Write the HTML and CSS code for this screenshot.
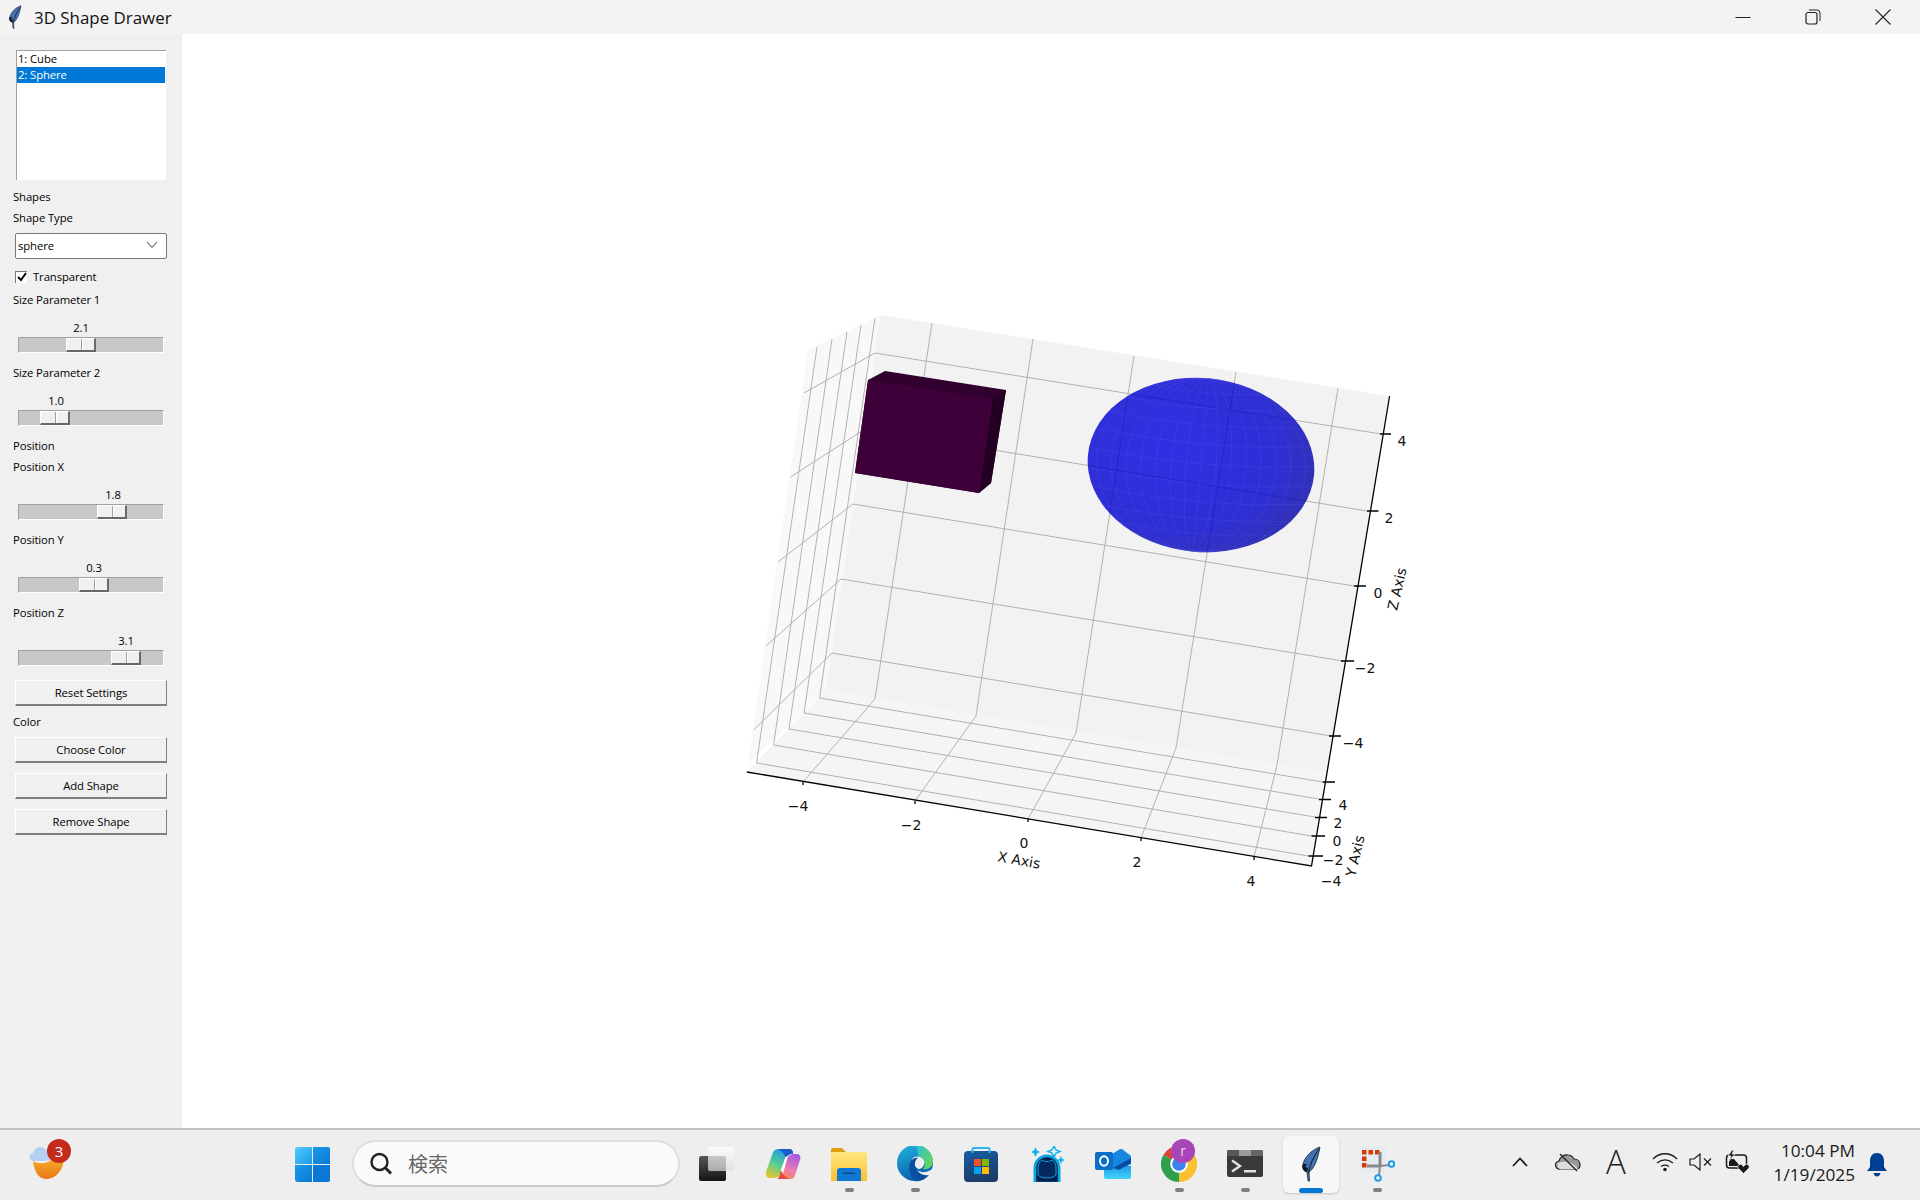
FILE: index.html
```html
<!DOCTYPE html>
<html lang="en">
<head>
  <meta charset="UTF-8">
  <meta name="viewport" content="width=device-width, initial-scale=1.0">
  <title>3D Shape Drawer</title>
  <link rel="stylesheet" href="styles.css">
</head>
<body>
  <svg class="defs" width="0" height="0">
    <defs>
      <symbol id="feather" viewBox="0 0 36 36">
        <path d="M27 1C20 3 12 10 10 18c-1 4 0 7 4 8l1 9h1.6L16 26C22 22 25 12 27 1z" fill="#4272b0" stroke="#10151f" stroke-width="0.700"/>
        <path d="M26 3C21 10 17 18 15.500 27" fill="none" stroke="#0c1420" stroke-width="1"/>
        <path d="M10 18c-1 4 0 7 4 8l1-4-3-1 2-3-3 0z" fill="#10151f"/>
      </symbol>
      <linearGradient id="winA" x1="0" y1="0" x2="1" y2="1"><stop offset="0" stop-color="#52cbfb"/><stop offset="1" stop-color="#1a9be8"/></linearGradient>
      <linearGradient id="winB" x1="0" y1="0" x2="1" y2="1"><stop offset="0" stop-color="#1a9be8"/><stop offset="1" stop-color="#0a78d4"/></linearGradient>
      <linearGradient id="sunG" x1="0" y1="0" x2="0" y2="1"><stop offset="0" stop-color="#f7b52a"/><stop offset="1" stop-color="#e9781a"/></linearGradient>
      <linearGradient id="dark" x1="0" y1="0" x2="0" y2="1"><stop offset="0" stop-color="#555"/><stop offset="1" stop-color="#141414"/></linearGradient>
      <linearGradient id="glass" x1="0" y1="0" x2="0" y2="1"><stop offset="0" stop-color="#fff"/><stop offset="1" stop-color="#ddd"/></linearGradient>
      <linearGradient id="copL" x1="0.6" y1="0" x2="0.2" y2="1"><stop offset="0" stop-color="#1a9be8"/><stop offset="0.55" stop-color="#5fce8a"/><stop offset="1" stop-color="#e8c62c"/></linearGradient>
      <linearGradient id="copR" x1="0.7" y1="0" x2="0.3" y2="1"><stop offset="0" stop-color="#a45be0"/><stop offset="0.6" stop-color="#ee7cb0"/><stop offset="1" stop-color="#f58a50"/></linearGradient>
      <linearGradient id="folder" x1="0" y1="0" x2="0" y2="1"><stop offset="0" stop-color="#ffe680"/><stop offset="1" stop-color="#fcc02e"/></linearGradient>
      <linearGradient id="edgeB" x1="0" y1="0" x2="0.4" y2="1"><stop offset="0" stop-color="#22b4dc"/><stop offset="1" stop-color="#0a5fb0"/></linearGradient>
      <linearGradient id="edgeG" x1="0" y1="0" x2="1" y2="0.7"><stop offset="0" stop-color="#2cc0d8"/><stop offset="1" stop-color="#62d65c"/></linearGradient>
      <linearGradient id="bag" x1="0" y1="0" x2="0.3" y2="1"><stop offset="0" stop-color="#175ea5"/><stop offset="1" stop-color="#1c3c6c"/></linearGradient>
      <linearGradient id="outl" x1="0" y1="0" x2="0" y2="1"><stop offset="0" stop-color="#1f9ae8"/><stop offset="1" stop-color="#43d4f9"/></linearGradient>
      <radialGradient id="ball" cx="0.36" cy="0.42" r="0.74"><stop offset="0" stop-color="#2828e4"/><stop offset="0.65" stop-color="#2727d4"/><stop offset="1" stop-color="#2a2aa6"/></radialGradient>
      <clipPath id="ballClip"><ellipse cx="0" cy="0" rx="113.500" ry="87"/></clipPath>
      <clipPath id="ballPage"><ellipse rx="113.500" ry="87" transform="translate(1201 465) rotate(5)"/></clipPath>
    </defs>
  </svg>

  <header class="titlebar">
    <svg class="title-icon" width="24" height="24"><use href="#feather"/></svg>
    <span class="title-text">3D Shape Drawer</span>
    <div class="window-btns">
      <button class="win-btn"><svg width="16" height="16" viewBox="0 0 16 16"><path d="M0.500 8.500h15" stroke="#222" fill="none"/></svg></button>
      <button class="win-btn"><svg width="16" height="16" viewBox="0 0 16 16"><rect x="1" y="3.500" width="11" height="11.500" rx="2" fill="none" stroke="#222" stroke-width="1.200"/><path d="M4 1h8a3 3 0 0 1 3 3v8" fill="none" stroke="#222"/></svg></button>
      <button class="win-btn"><svg width="16" height="16" viewBox="0 0 16 16"><path d="M0.500 0.500l15 15M15.500 0.500l-15 15" stroke="#222" stroke-width="1.100" fill="none"/></svg></button>
    </div>
  </header>

  <div class="window-body">
    <aside class="sidebar">
      <div class="listbox">
        <div class="list-row">1: Cube</div>
        <div class="list-row selected">2: Sphere</div>
      </div>
      <div class="label first">Shapes</div>
      <div class="label">Shape Type</div>
      <div class="combo">
        <span>sphere</span>
        <svg width="12" height="8" viewBox="0 0 12 8"><path d="M1 1l5 5.500L11 1" fill="none" stroke="#666" stroke-width="1.100"/></svg>
      </div>
      <label class="check-row">
        <span class="check-box"><svg width="10" height="10" viewBox="0 0 10 10"><path d="M1 5l3 3 5-7" fill="none" stroke="#000" stroke-width="2"/></svg></span>
        Transparent
      </label>

      <div class="label">Size Parameter 1</div>
      <div class="scale-value" style="--at: 48px">2.1</div>
      <div class="trough"><div class="thumb" style="--at: 48px"></div></div>

      <div class="label gap">Size Parameter 2</div>
      <div class="scale-value" style="--at: 23px">1.0</div>
      <div class="trough"><div class="thumb" style="--at: 22px"></div></div>

      <div class="label gap">Position</div>
      <div class="label">Position X</div>
      <div class="scale-value" style="--at: 80px">1.8</div>
      <div class="trough"><div class="thumb" style="--at: 79px"></div></div>

      <div class="label gap">Position Y</div>
      <div class="scale-value" style="--at: 61px">0.3</div>
      <div class="trough"><div class="thumb" style="--at: 61px"></div></div>

      <div class="label gap">Position Z</div>
      <div class="scale-value" style="--at: 93px">3.1</div>
      <div class="trough"><div class="thumb" style="--at: 93px"></div></div>

      <button class="btn reset">Reset Settings</button>
      <div class="label color-label">Color</div>
      <button class="btn choose">Choose Color</button>
      <button class="btn next">Add Shape</button>
      <button class="btn next">Remove Shape</button>
    </aside>

    <main class="plot-area">
      <svg class="plot" viewBox="182 34 1738 1094" width="1738" height="1094">
        <!-- panes -->
        <polygon points="880.700,315 808,350 748,764 826,690" fill="#f8f8f8"/>
        <polygon points="880.700,315 1389.600,396 1327,773 826,690" fill="#f2f2f2"/>
        <polygon points="826,690 1327,773 1311.500,866 746.800,772" fill="#f5f5f5"/>

        <!-- grid -->
        <g fill="none" stroke="#b2b2b2" stroke-width="1">
          <path d="M932 323L875 699L803 782"/>
          <path d="M1033 339L976 716L915 801"/>
          <path d="M1134 356L1076 733L1028 819"/>
          <path d="M1236 372L1176 748L1141 838"/>
          <path d="M1338 388L1277 765L1254 857"/>
          <path d="M804 393L875 353L1381 434"/>
          <path d="M790.500 477L865 429L1367 511"/>
          <path d="M778 562L853 504L1354 586"/>
          <path d="M766 646L841 579L1343 661"/>
          <path d="M753.500 730L832 653L1331 736"/>
          <path d="M875 318L819.600 698L1322.700 782"/>
          <path d="M861 325L804 713L1319 799"/>
          <path d="M847 332L789 729L1315 817"/>
          <path d="M832 339L773.600 745L1311.500 836"/>
          <path d="M817 347L756.600 763L1308.400 856"/>
        </g>

        <!-- cube -->
        <polygon points="868,380 885,371 1006,390 991,483 979,493 855,473" fill="#32002f"/>
        <polygon points="993,399 1006,390 991,483 979,493" fill="#230022"/>
        <polygon points="868,380 993,399 979,493 855,473" fill="#3d0039"/>

        <!-- sphere -->
        <g transform="translate(1201 465) rotate(5)">
          <ellipse rx="113.500" ry="87" fill="url(#ball)" fill-opacity="0.96"/>
          <g clip-path="url(#ballClip)" fill="none" stroke="#6464ee" stroke-width="0.500" stroke-opacity="0.4">
            <ellipse rx="105" ry="87"/>
            <ellipse rx="90" ry="87"/>
            <ellipse rx="75" ry="87"/>
            <ellipse rx="60" ry="87"/>
            <ellipse rx="45" ry="87"/>
            <ellipse rx="30" ry="87"/>
            <ellipse rx="15" ry="87"/>
            <path d="M0 -87V87M-113 -8Q0 6 113 -8M-113 12Q0 26 113 12M-108 30Q0 44 108 30M-100 48Q0 60 100 48M-80 64Q0 74 80 64M-113 -28Q0 -14 113 -28M-106 -46Q0 -34 106 -46M-90 -62Q0 -52 90 -62M-60 -76Q0 -68 60 -76"/>
          </g>
        </g>
        <g clip-path="url(#ballPage)" fill="none" stroke="#1a1aa8" stroke-width="1" stroke-opacity="0.4">
          <path d="M1134 356L1076 733M1236 372L1176 748M875 353L1381 434M865 429L1367 511"/>
        </g>

        <!-- axes -->
        <g fill="none" stroke="#000" stroke-width="1.300">
          <path d="M746.800 772L1311.500 866L1389.600 396"/>
          <path d="M1380 434H1391M1367 511H1378.500M1354 586H1366M1341 661H1354M1329 736H1341"/>
          <path d="M1322.700 782H1335M1319 799.500H1331M1315 817.500H1327M1311.500 836H1325M1308.400 856H1323"/>
          <path d="M803 782V785M915 801V804M1028 819V822M1141 838V841M1254 857V860"/>
        </g>

        <g class="tick-text" text-anchor="middle">
          <text x="798" y="811">−4</text>
          <text x="911" y="830">−2</text>
          <text x="1024" y="848">0</text>
          <text x="1137" y="867">2</text>
          <text x="1251" y="886">4</text>
          <text x="1343" y="810">4</text>
          <text x="1338" y="828">2</text>
          <text x="1337" y="846">0</text>
          <text x="1333" y="865">−2</text>
          <text x="1331" y="886">−4</text>
          <text x="1402" y="446">4</text>
          <text x="1389" y="523">2</text>
          <text x="1378" y="598">0</text>
          <text x="1365" y="673">−2</text>
          <text x="1353" y="748">−4</text>
          <text x="1019" y="865" transform="rotate(10 1019 860)">X Axis</text>
          <text x="1355" y="861" transform="rotate(-77 1355 856)">Y Axis</text>
          <text x="1397" y="594" transform="rotate(-77 1397 589)">Z Axis</text>
        </g>
      </svg>
    </main>
  </div>

  <footer class="taskbar">
    <div class="weather">
      <svg width="40" height="40" viewBox="0 0 40 40">
        <path d="M5 21C11 25 24 24 28 14l8 3C36 30 28 39 18 39 10 39 6 30 5 21z" fill="url(#sunG)"/>
        <path d="M6 21a4 4 0 0 1-1-8c1-4 4-6 7-6 4 0 6 2 8 5 3 0 4 5 2 8-1 1-15 1-16 1z" fill="#b4d0f4"/>
      </svg>
      <span class="weather-badge">3</span>
    </div>

    <div class="start">
      <svg width="36" height="36" viewBox="0 0 36 36">
        <path d="M3 0h14v17H0V3a3 3 0 0 1 3-3z" fill="url(#winA)"/>
        <path d="M18 0h15a2 2 0 0 1 2 2v15H18z" fill="url(#winB)"/>
        <path d="M0 18h17v17H3a3 3 0 0 1-3-3z" fill="url(#winB)"/>
        <path d="M18 18h17v15a2 2 0 0 1-2 2H18z" fill="#0a78d4"/>
      </svg>
    </div>

    <div class="search">
      <svg width="24" height="24" viewBox="0 0 24 24"><circle cx="10.500" cy="10" r="8" fill="none" stroke="#222" stroke-width="2.400"/><path d="M16.500 16l5.500 5.500" stroke="#222" stroke-width="2.800" fill="none"/></svg>
      <span>検索</span>
    </div>

    <div class="task-icons">
      <div class="task-item">
        <svg width="36" height="36" viewBox="0 0 36 36">
          <rect x="0" y="10" width="27" height="25" rx="2" fill="url(#dark)"/>
          <rect x="9" y="1" width="26" height="24" rx="2" fill="url(#glass)" fill-opacity="0.72"/>
        </svg>
      </div>
      <div class="task-item">
        <svg width="36" height="36" viewBox="0 0 36 36">
          <path d="M13 3h11c3 0 4 2 4 4-4 0-6 2-7 5l-5 15c-1 3-4 5-8 5H5c-3 0-5-3-4-6L7 9c1-4 3-6 6-6z" fill="url(#copL)"/>
          <path d="M25 33H12c3 0 5-2 6-5l4-15c1-3 4-5 8-5h2c3 0 4 3 3 6l-5 15c-1 3-2 4-5 4z" fill="url(#copR)"/>
          <path d="M13 3h11c3 0 4 2 4 5-4 0-6 2-7 5-1-5-4-8-8-10z" fill="#1d58c8"/>
          <path d="M12 33h13c-4-1-8-5-9-9-1 5-2 8-4 9z" fill="#e8483a"/>
          <path d="M15.500 25l5-14 2.500-1-5 15z" fill="#fff"/>
        </svg>
      </div>
      <div class="task-item running">
        <svg width="36" height="36" viewBox="0 0 36 36">
          <path d="M0 4a2 2 0 0 1 2-2h9l4 4h21v5H0z" fill="#dc9f0c"/>
          <rect x="0" y="6" width="36" height="29" fill="url(#folder)"/>
          <path d="M6 25a3 3 0 0 1 3-3h18a3 3 0 0 1 3 3v10H6z" fill="#0f78d4"/>
          <rect x="12" y="26.500" width="12" height="1.500" fill="#0b4a8e"/>
        </svg>
      </div>
      <div class="task-item running">
        <svg width="36" height="36" viewBox="0 0 36 36">
          <circle cx="18" cy="17" r="18" fill="url(#edgeB)"/>
          <path d="M18-1C29-1 36 7 36 15c0 6-5 9-10 8 3-3 2-9-4-11-2-6-1-11-4-13z" fill="url(#edgeG)"/>
          <path d="M15 13c3-4 10-3 12 2 1 4-2 8-5 8-4-1-7-6-7-10z" fill="#eee"/>
          <path d="M36 21c-2 5-11 7-16 3 1 5 7 9 14 5 1-2 2-5 2-8z" fill="#eee"/>
          <path d="M14 15c2-3 5-4 7-3-3 2-4 6-2 10 2 5 7 8 13 7-4 5-10 7-14 6-5-4-8-14-4-20z" fill="#0b4f9e"/>
        </svg>
      </div>
      <div class="task-item">
        <svg width="36" height="36" viewBox="0 0 36 36">
          <rect x="1" y="5" width="34" height="31" rx="4" fill="url(#bag)"/>
          <path d="M9.500 7V3a1 1 0 0 1 1-1h15a1 1 0 0 1 1 1v4" fill="none" stroke="#2ab5f3" stroke-width="2"/>
          <rect x="11" y="13" width="7" height="7" fill="#f25022"/>
          <rect x="19" y="13" width="7" height="7" fill="#7fba00"/>
          <rect x="11" y="21" width="7" height="7" fill="#00a4ef"/>
          <rect x="19" y="21" width="7" height="7" fill="#ffb900"/>
        </svg>
      </div>
      <div class="task-item">
        <svg width="36" height="36" viewBox="0 0 36 36">
          <path d="M4.500 36V22a13.500 13.500 0 0 1 27 0v14z" fill="#0aa5dc"/>
          <path d="M7 36V22a11 11 0 0 1 22 0v14z" fill="#021e4c" stroke="#0aa5dc" stroke-width="0.500"/>
          <path d="M9 22c0-4 2-7 4-8 3 2 7 2 10 0 2 1 4 4 4 8v7c-3 4-15 4-18 0z" fill="#06285f" stroke="#0aa5dc" stroke-width="1"/>
          <path d="M6.500 1l1.500 3.500 3 1.500-3 1.500-1.500 3.500-1.500-3.500-3-1.500 3-1.500z" fill="#12b3ee"/>
          <path d="M25 0l2 4 4 1.500-4 1.500-2 4-2-4-4-1.500 4-1.500z" fill="none" stroke="#12b3ee" stroke-width="1.500"/>
          <path d="M32 10l1.200 2.800 2.800 1.200-2.800 1.200-1.200 2.800-1.200-2.800-2.800-1.200 2.800-1.200z" fill="#12b3ee"/>
        </svg>
      </div>
      <div class="task-item">
        <svg width="36" height="36" viewBox="0 0 36 36">
          <path d="M9 20h27v11a2 2 0 0 1-2 2H11a2 2 0 0 1-2-2z" fill="url(#outl)"/>
          <path d="M14 10L25 3h2l9 7v8l-5 3H14z" fill="#1688e0"/>
          <path d="M18 22l18-10v5l-12 7z" fill="#0a4b9e"/>
          <rect x="0" y="6" width="18" height="18" rx="2" fill="#0a6fc9"/>
          <ellipse cx="9" cy="15" rx="4" ry="4.800" fill="none" stroke="#fff" stroke-width="2"/>
        </svg>
      </div>
      <div class="task-item running">
        <svg width="36" height="36" viewBox="0 0 36 36">
          <path d="M18 18L2.400 9A18 18 0 0 1 33.600 9z" fill="#db4437"/>
          <path d="M18 18L33.600 9A18 18 0 0 1 18 36z" fill="#fbc02d"/>
          <path d="M18 18L18 36A18 18 0 0 1 2.400 9z" fill="#2e9e4f"/>
          <circle cx="18" cy="18" r="8.800" fill="#fff"/>
          <circle cx="18" cy="18" r="6.800" fill="#3b82ee"/>
        </svg>
        <span class="profile-badge">r</span>
      </div>
      <div class="task-item running">
        <svg width="36" height="36" viewBox="0 0 36 36">
          <rect x="0" y="4" width="36" height="27" rx="2" fill="#3a3a3a"/>
          <path d="M0 6a2 2 0 0 1 2-2h10v6H0z" fill="#585858"/>
          <rect x="12" y="4" width="12" height="6" fill="#9a9a9a"/>
          <path d="M24 4h10a2 2 0 0 1 2 2v4H24z" fill="#666"/>
          <path d="M5 14.500l8 5.500-8 5.500" fill="none" stroke="#e2e2e2" stroke-width="2.400"/>
          <rect x="17" y="24" width="12" height="2.500" fill="#e2e2e2"/>
        </svg>
      </div>
      <div class="task-item active">
        <svg width="36" height="36"><use href="#feather"/></svg>
      </div>
      <div class="task-item running">
        <svg width="36" height="36" viewBox="0 0 36 36">
          <rect x="0" y="0" width="27" height="27" rx="3" fill="#e5ebf0"/>
          <g fill="#d83b01">
            <rect x="3" y="4" width="4.500" height="4.500"/><rect x="9.500" y="4" width="4.500" height="4.500"/><rect x="16" y="4" width="4.500" height="4.500"/>
            <rect x="3" y="10.500" width="4.500" height="4.500"/><rect x="3" y="17" width="4.500" height="4.500"/>
          </g>
          <path d="M21 6V20H8" fill="none" stroke="#8a8a8a" stroke-width="3"/>
          <path d="M21 20L30 19M21 20L20 29" stroke="#8a8a8a" stroke-width="2" fill="none"/>
          <circle cx="32.500" cy="18" r="2.800" fill="#fff" stroke="#1a9be8" stroke-width="2"/>
          <circle cx="19" cy="32" r="2.800" fill="#fff" stroke="#1a9be8" stroke-width="2"/>
        </svg>
      </div>
    </div>

    <div class="tray">
      <div class="tray-item wide">
        <svg width="18" height="12" viewBox="0 0 18 12"><path d="M2 10l7-7.500 7 7.500" fill="none" stroke="#1a1a1a" stroke-width="1.800"/></svg>
      </div>
      <div class="tray-item wide">
        <svg width="26" height="20" viewBox="0 0 26 20">
          <path d="M5 17a4 4 0 0 1-1-8c1-4 5-7 9-6 3 0 5 2 6 4 4 0 6 3 6 6s-2 4-4 4z" fill="#9a9a9a" stroke="#222" stroke-width="1.200"/>
          <path d="M3 11c5-3 16-1 20 6H5a4 4 0 0 1-2-6z" fill="#dcdcdc"/>
          <path d="M5 2l17 17" stroke="#222" stroke-width="1.200" fill="none"/>
        </svg>
      </div>
      <div class="tray-item wide ime">A</div>
      <div class="tray-item">
        <svg width="26" height="20" viewBox="0 0 26 20">
          <g fill="none" stroke="#1a1a1a" stroke-width="1.300"><path d="M1 7c7-7 17-7 24 0"/><path d="M5 11c5-4 11-4 16 0"/><path d="M9 14.500c3-2 5-2 8 0"/></g>
          <circle cx="13" cy="17.500" r="1.800" fill="#1a1a1a"/>
        </svg>
      </div>
      <div class="tray-item">
        <svg width="24" height="18" viewBox="0 0 24 18">
          <path d="M1 6h4l6-5v16l-6-5H1z" fill="none" stroke="#1a1a1a" stroke-width="1.200"/>
          <path d="M15 5.500l7 7M22 5.500l-7 7" stroke="#1a1a1a" stroke-width="1.200" fill="none"/>
        </svg>
      </div>
      <div class="tray-item">
        <svg width="25" height="24" viewBox="0 0 25 24">
          <rect x="1.500" y="5" width="20" height="13" rx="3" fill="none" stroke="#1a1a1a" stroke-width="1.500"/>
          <path d="M4 16V9h5l6 7z" fill="#1a1a1a"/>
          <path d="M7 0L3 6h3l-2 5 6-7H7l2-4z" fill="#1a1a1a" stroke="#eee" stroke-width="0.800"/>
          <path d="M18.500 23.500l-5-5c-2.500-3 2-6 4-3l1 1 1-1c2-3 6.500 0 4 3z" fill="#1a1a1a" stroke="#eee" stroke-width="0.800"/>
        </svg>
      </div>
      <div class="clock">
        <div>10:04 PM</div>
        <div>1/19/2025</div>
      </div>
      <div class="bell">
        <svg width="20" height="24" viewBox="0 0 20 24"><path d="M10 0c4.500 0 7 3.500 7 8v6l3 4H0l3-4V8c0-4.500 2.500-8 7-8z" fill="#003e92"/><path d="M6.500 20h7c-.5 2.500-2 3.500-3.500 3.500s-3-1-3.500-3.500z" fill="#003e92"/></svg>
      </div>
    </div>
  </footer>
</body>
</html>
```

FILE: styles.css
```css
* {
  box-sizing: border-box;
}
html, body {
  margin: 0;
  padding: 0;
}
body {
  width: 1920px;
  height: 1200px;
  display: flex;
  flex-direction: column;
  overflow: hidden;
  font-family: "Open Sans", "Noto Sans", sans-serif;
  color: #000;
  background: #fff;
}
svg {
  display: block;
}
.defs {
  position: absolute;
}

/* title bar */
.titlebar {
  height: 34px;
  flex: none;
  display: flex;
  align-items: center;
  background: #f3f3f3;
  padding-left: 3px;
}
.title-text {
  margin-left: 7px;
  font-size: 16.900px;
  color: #111;
}
.window-btns {
  margin-left: auto;
  display: flex;
  margin-right: 2px;
}
.win-btn {
  width: 70px;
  height: 34px;
  padding: 0;
  border: 0;
  background: none;
  display: flex;
  align-items: center;
  justify-content: center;
}

.window-body {
  height: 1094px;
  flex: none;
  display: flex;
}

/* tk controls */
.sidebar {
  width: 182px;
  flex: none;
  background: #f0f0f0;
  padding-top: 16px;
  font-size: 11.300px;
  letter-spacing: -0.100px;
}
.listbox {
  width: 150px;
  height: 130px;
  margin-left: 16px;
  background: #fff;
  border-top: 1px solid #a0a0a0;
  border-left: 1px solid #a0a0a0;
}
.list-row {
  height: 16px;
  line-height: 16px;
  padding-left: 1px;
}
.list-row.selected {
  background: #0078d7;
  color: #fff;
  margin-right: 1px;
}
.label {
  height: 21px;
  line-height: 19px;
  padding-left: 13px;
  white-space: nowrap;
}
.label.first {
  margin-top: 7px;
}
.label.gap {
  margin-top: 10px;
}
.combo {
  width: 152px;
  height: 26px;
  margin: 4px 0 0 15px;
  background: #fff;
  border: 1px solid #7a7a7a;
  border-radius: 2px;
  display: flex;
  align-items: center;
  justify-content: space-between;
  padding: 0 8px 2px 2px;
}
.check-row {
  height: 21px;
  margin: 7px 0 3px 15px;
  display: flex;
  align-items: center;
  gap: 6px;
}
.check-box {
  width: 12px;
  height: 12px;
  background: #fff;
  border-top: 1px solid #777;
  border-left: 1px solid #777;
  display: flex;
  align-items: center;
  justify-content: center;
}
.scale-value {
  width: 30px;
  height: 17px;
  line-height: 15px;
  margin: 9px 0 0 calc(18px + var(--at));
  text-align: center;
}
.trough {
  position: relative;
  width: 146px;
  height: 16px;
  margin-left: 18px;
  background: #c8c8c8;
  border-top: 1px solid #a0a0a0;
  border-left: 1px solid #a0a0a0;
  border-right: 1px solid #fff;
  border-bottom: 1px solid #fff;
}
.thumb {
  position: absolute;
  left: calc(var(--at) - 1px);
  top: 0;
  width: 30px;
  height: 14px;
  background: linear-gradient(90deg, #f0f0f0 14px, #a0a0a0 14px, #a0a0a0 15px, #fff 15px, #fff 16px, #f0f0f0 16px);
  border-top: 1px solid #fff;
  border-left: 1px solid #fff;
  border-right: 2px solid #696969;
  border-bottom: 2px solid #696969;
}
.btn {
  display: block;
  width: 152px;
  height: 26px;
  margin-left: 15px;
  padding: 0;
  font: inherit;
  letter-spacing: inherit;
  color: #000;
  background: #f0f0f0;
  border-top: 1px solid #fff;
  border-left: 1px solid #fff;
  border-right: 1px solid #808080;
  border-bottom: 2px solid #808080;
}
.btn.reset {
  margin-top: 14px;
}
.label.color-label {
  margin-top: 6px;
}
.btn.choose {
  margin-top: 4px;
}
.btn.next {
  margin-top: 10px;
}

/* plot */
.plot-area {
  flex: 1;
  background: #fff;
}
.tick-text text {
  font-family: "DejaVu Sans", sans-serif;
  font-size: 14px;
  fill: #111;
}

/* taskbar */
.taskbar {
  height: 72px;
  flex: none;
  display: flex;
  background: #eee;
  border-top: 2px solid #c0c0c0;
}
.weather {
  position: relative;
  width: 40px;
  height: 40px;
  margin: 10px 0 0 28px;
}
.weather-badge {
  position: absolute;
  left: 19px;
  top: -1px;
  width: 24px;
  height: 24px;
  border-radius: 50%;
  background: #c42b1c;
  color: #fff;
  font-size: 15px;
  line-height: 24px;
  text-align: center;
}
.start {
  margin: 17px 0 0 227px;
  width: 36px;
}
.search {
  width: 328px;
  height: 47px;
  margin: 10px 0 0 21px;
  background: #fafafa;
  border: 2px solid #dedede;
  border-bottom-color: #cacaca;
  border-radius: 24px;
  display: flex;
  align-items: center;
  padding-left: 15px;
  font-family: "Noto Sans CJK JP", sans-serif;
  font-size: 20px;
  color: #666;
}
.search span {
  margin-left: 15px;
}
.task-icons {
  display: flex;
  margin-left: 4px;
}
.task-item {
  position: relative;
  width: 66px;
  padding: 16px 15px 0;
}
.task-item.running::after,
.task-item.active::after {
  content: "";
  position: absolute;
  left: 28.500px;
  bottom: 8px;
  width: 9px;
  height: 4.500px;
  border-radius: 3px;
  background: #808080;
}
.task-item.active::before {
  content: "";
  position: absolute;
  left: 5px;
  top: 6px;
  width: 56px;
  height: 57px;
  border-radius: 6px;
  background: #f7f7f7;
  box-shadow: 0 1px 2px rgba(0,0,0,0.18);
}
.task-item.active svg {
  position: relative;
}
.task-item.active::after {
  left: 21px;
  bottom: 7px;
  width: 24px;
  height: 5px;
  background: #0078d4;
}
.profile-badge {
  position: absolute;
  left: 25px;
  top: 9px;
  width: 24px;
  height: 24px;
  border-radius: 50%;
  background: #a845b8;
  color: #e8cfe0;
  font-size: 14px;
  line-height: 23px;
  text-align: center;
}
.tray {
  margin-left: auto;
  display: flex;
  padding-right: 33px;
}
.tray-item {
  width: 36px;
  height: 70px;
  display: flex;
  align-items: center;
  justify-content: center;
  padding-bottom: 6px;
}
.tray-item.wide {
  width: 48px;
}
.tray-item.ime {
  font-size: 33px;
  font-weight: 300;
  color: #222;
  padding-bottom: 8px;
  margin-right: 7px;
}
.clock {
  width: 96px;
  margin-left: 4px;
  padding-top: 9px;
  text-align: right;
  font-size: 17.200px;
  line-height: 24px;
  color: #1a1a1a;
}
.bell {
  margin-left: 12px;
  padding-top: 23px;
}
```
